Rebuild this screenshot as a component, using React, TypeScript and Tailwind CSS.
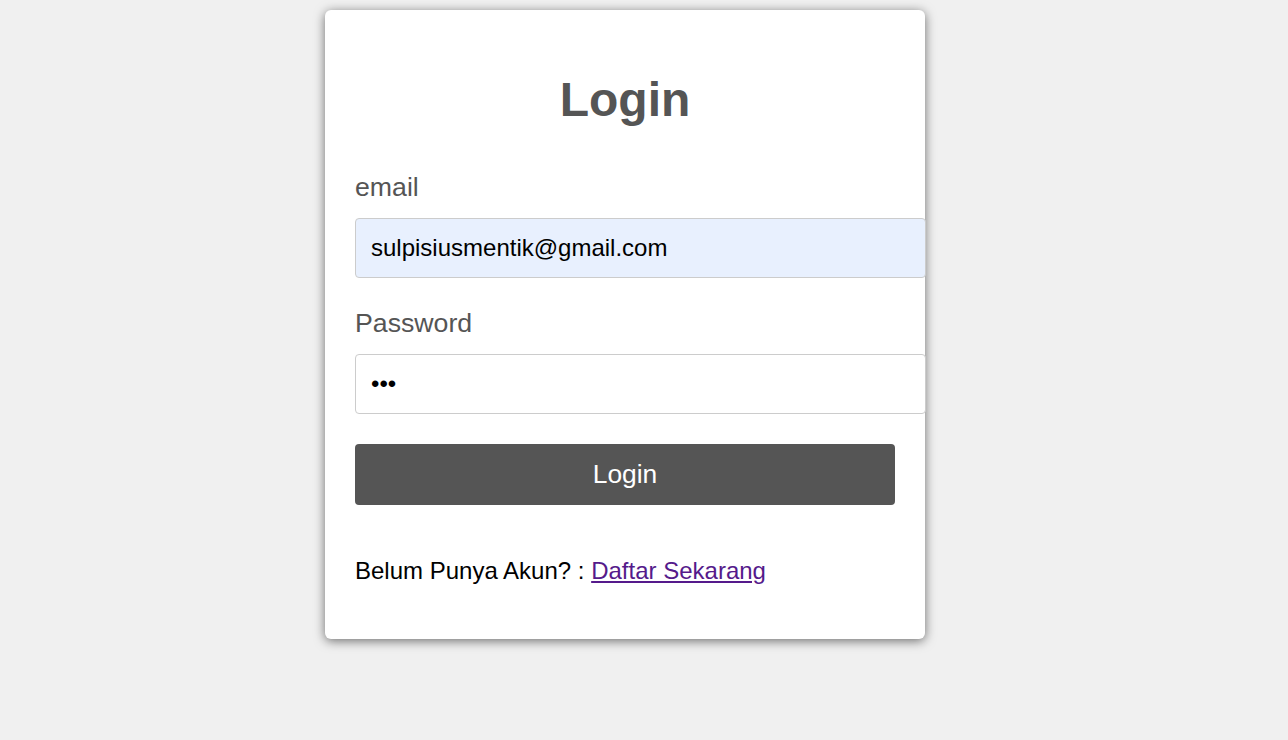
export default function App() {
  return (
    <div className="min-h-[740px] w-full bg-[#f0f0f0] font-['Liberation_Sans',Arial,sans-serif]">
      <div className="flex pt-[10px] pl-[325px]">
        <div className="w-[600px] rounded-[6px] bg-white px-[30px] pt-[30px] pb-[54px] shadow-[0_2px_11px_rgba(0,0,0,0.55)]">
          <h1 className="mt-[32px] text-center text-[48px] leading-[55px] font-bold text-[#555]">Login</h1>
          <label className="mt-[45px] block text-[26.7px] leading-[30px] text-[#555]">email</label>
          <input
            type="email"
            defaultValue="sulpisiusmentik@gmail.com"
            className="mt-[16px] block h-[60px] w-[571px] rounded-[4px] border border-[#ccc] bg-[#e8f0fe] px-[15px] text-[24px] text-black outline-none"
          />
          <label className="mt-[30px] block text-[26.7px] leading-[30px] text-[#555]">Password</label>
          <input
            type="password"
            defaultValue="abc"
            className="mt-[16px] block h-[60px] w-[571px] rounded-[4px] border border-[#ccc] bg-white px-[15px] text-[24px] text-black outline-none"
          />
          <button className="mt-[30px] block h-[61px] w-full rounded-[4px] bg-[#555] text-[26.4px] text-white">Login</button>
          <p className="mt-[52px] text-[24px] leading-[28px] text-black">
            Belum Punya Akun? : <a href="#" className="text-[#551a8b] underline">Daftar Sekarang</a>
          </p>
        </div>
      </div>
    </div>
  );
}
